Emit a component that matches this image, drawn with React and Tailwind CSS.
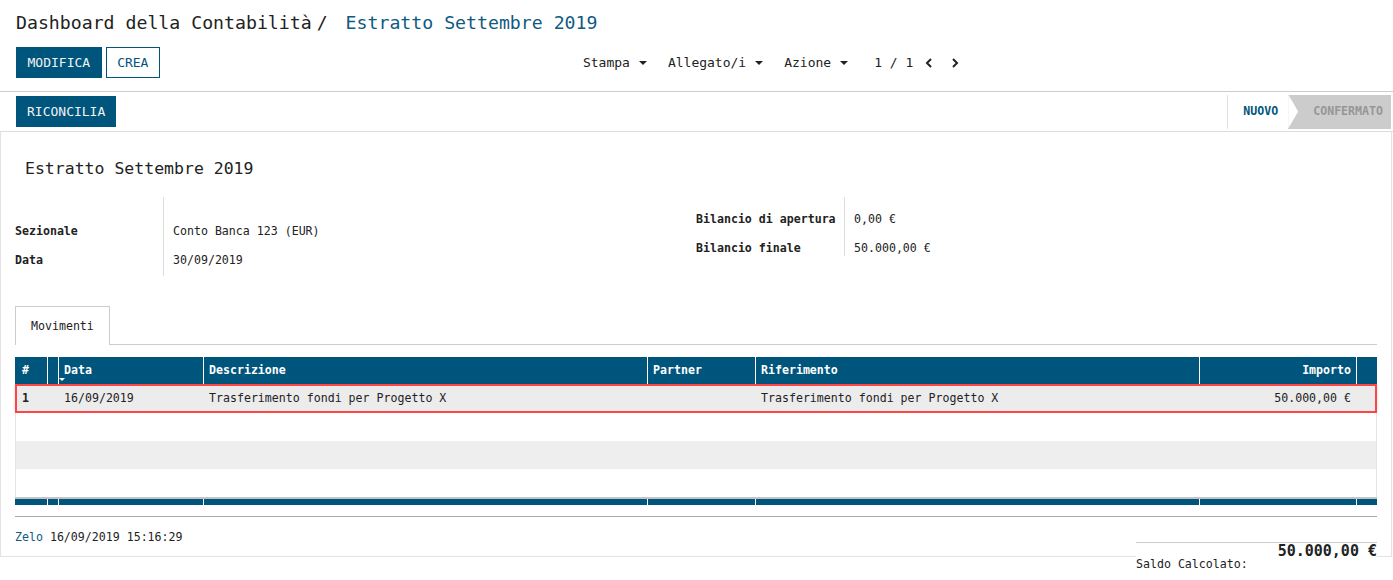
import React from 'react'

const HEAD_COLS = 'grid grid-cols-[32px_11px_145px_444px_108px_444px_157px_21px]'
const SEL_COLS = 'grid grid-cols-[30px_11px_145px_444px_108px_444px_157px_19px]'

function Caret() {
  return (
    <svg width="8" height="4" viewBox="0 0 8 4" className="ml-[9px]">
      <path d="M0 0h8L4 4z" fill="currentColor" />
    </svg>
  )
}

function Chevron({ dir }) {
  return (
    <svg width="8" height="10" viewBox="0 0 8 10">
      <polyline
        points={dir === 'left' ? '6,1 2,5 6,9' : '2,1 6,5 2,9'}
        fill="none"
        stroke="#222"
        strokeWidth="2"
      />
    </svg>
  )
}

function Label({ children }) {
  return <div className="leading-[29px] font-bold">{children}</div>
}

export default function App() {
  return (
    <div className="w-[1393px] min-h-[580px] bg-white text-[#222] font-['DejaVu_Sans_Mono',monospace]">

      {/* ── Control panel ── */}
      <div className="h-[92px] border-b border-[#cccccc] px-4 pt-[11px]">
        <div className="flex items-baseline leading-[24px] text-[18.2px]">
          <span>Dashboard della Contabilità</span>
          <span className="ml-[5px]">/</span>
          <span className="ml-[18px] text-[#0f5a80]">Estratto Settembre 2019</span>
        </div>
        <div className="mt-[12px] flex items-center h-[31px] text-[13px]">
          <button className="h-[31px] px-[10.5px] border border-[#00557d] bg-[#00557d] text-[#f2f2f2]">MODIFICA</button>
          <button className="ml-[4px] h-[31px] px-[10.5px] border border-[#00557d] bg-white text-[#00557d]">CREA</button>

          <div className="ml-[423px] flex items-center text-[#222]">
            <span>Stampa</span><Caret />
            <span className="ml-[21px]">Allegato/i</span><Caret />
            <span className="ml-[21px]">Azione</span><Caret />
            <span className="ml-[26px]">1 / 1</span>
            <span className="ml-[12px] flex"><Chevron dir="left" /></span>
            <span className="ml-[18px] flex"><Chevron dir="right" /></span>
          </div>
        </div>
      </div>

      {/* ── Status bar ── */}
      <div className="h-[40px] border-b border-[#dddddd] pl-4 pr-[2px] flex items-center justify-between">
        <button className="h-[31px] px-[11px] bg-[#00557d] text-[13px] text-[#f2f2f2]">RICONCILIA</button>
        <div className="flex h-[34px] text-[11.6px] font-bold">
          <div className="flex items-center border-l border-[#e0e0e0] pl-[15px] pr-[10px] text-[#00557d]">NUOVO</div>
          <div className="relative flex items-center bg-[#cccccc] pl-[25px] pr-[8px] text-[#969696]">
            <span className="absolute left-0 top-0 h-full w-[10px] bg-white [clip-path:polygon(0_0,100%_50%,0_100%)]" />
            CONFERMATO
          </div>
        </div>
      </div>

      {/* ── Sheet ── */}
      <div className="w-[1392px] h-[425px] border-x border-b border-[#e3e3e3] px-[14px] pt-[25px] text-[11.6px]">
        <div className="ml-[10px] text-[16.5px] leading-[24px]">Estratto Settembre 2019</div>

        <div className="mt-[16px] flex items-start">
          <div className="w-[681px] flex">
            <div className="w-[149px] h-[79px] border-r border-[#dcdcdc] pt-[20px]">
              <Label>Sezionale</Label>
              <Label>Data</Label>
            </div>
            <div className="pl-[9px] pt-[20px] leading-[29px]">
              <div>Conto Banca 123 (EUR)</div>
              <div>30/09/2019</div>
            </div>
          </div>
          <div className="flex">
            <div className="w-[149px] h-[59px] border-r border-[#dcdcdc] pt-[8px]">
              <Label>Bilancio di apertura</Label>
              <Label>Bilancio finale</Label>
            </div>
            <div className="pl-[9px] pt-[8px] leading-[29px]">
              <div>0,00 €</div>
              <div>50.000,00 €</div>
            </div>
          </div>
        </div>

        {/* tabs */}
        <div className="mt-[30px] flex border-b border-[#cccccc]">
          <div className="-mb-px h-[39px] w-[95px] border-x border-t border-[#cccccc] bg-white pl-[15px] pt-[1px] flex items-center">
            Movimenti
          </div>
        </div>

        {/* table */}
        <div className="mt-[12px] w-[1362px]">
          <div className={`${HEAD_COLS} h-[27px] bg-[#00557d] text-white font-bold items-stretch`}>
            <div className="pl-[7px] pt-[1px] flex items-center">#</div>
            <div className="border-l border-white" />
            <div className="relative border-l border-white pl-[5px] pt-[1px] flex items-center">
              Data
              <svg width="6" height="3" viewBox="0 0 6 3" className="absolute left-0 bottom-[3px]">
                <path d="M0 0h6L3 3z" fill="white" />
              </svg>
            </div>
            <div className="border-l border-white pl-[5px] pt-[1px] flex items-center">Descrizione</div>
            <div className="border-l border-white pl-[5px] pt-[1px] flex items-center">Partner</div>
            <div className="border-l border-white pl-[5px] pt-[1px] flex items-center">Riferimento</div>
            <div className="border-l border-white pr-[5px] pt-[1px] flex items-center justify-end">Importo</div>
            <div className="border-l border-white" />
          </div>

          <div className={`${SEL_COLS} h-[29px] border-2 border-[#ff4444] bg-[#ececec] items-center pt-[1px] shadow-[0_1px_3px_rgba(0,0,0,0.15)]`}>
            <div className="pl-[5px] font-bold">1</div>
            <div />
            <div className="pl-[6px]">16/09/2019</div>
            <div className="pl-[6px]">Trasferimento fondi per Progetto X</div>
            <div />
            <div className="pl-[6px]">Trasferimento fondi per Progetto X</div>
            <div className="pr-[5px] text-right">50.000,00 €</div>
            <div />
          </div>
          <div className="h-[28px] border-x border-[#e5e5e5] bg-white" />
          <div className="h-[28px] border-x border-[#e5e5e5] bg-[#eeeeee]" />
          <div className="h-[28px] border-x border-[#e5e5e5] bg-white" />

          <div className={`${HEAD_COLS} h-[8px] border-t-2 border-[#c4c4c4] bg-[#00557d]`}>
            <div />
            <div className="border-l border-white" />
            <div className="border-l border-white" />
            <div className="border-l border-white" />
            <div className="border-l border-white" />
            <div className="border-l border-white" />
            <div className="border-l border-white" />
            <div className="border-l border-white" />
          </div>
        </div>

        {/* footer */}
        <div className="mt-[11px] border-t border-[#a8a8a8] flex items-start">
          <div className="mt-[10px] leading-[20px]">
            <span className="text-[#0f5a80]">Zelo</span> 16/09/2019 15:16:29
          </div>
          <div className="ml-auto mt-[25px] w-[241px] border-t border-[#cccccc] bg-white">
            <div className="text-right text-[15px] font-bold leading-[16px]">50.000,00 €</div>
            <div className="-mt-px leading-[12px]">Saldo Calcolato:</div>
          </div>
        </div>
      </div>
    </div>
  )
}
